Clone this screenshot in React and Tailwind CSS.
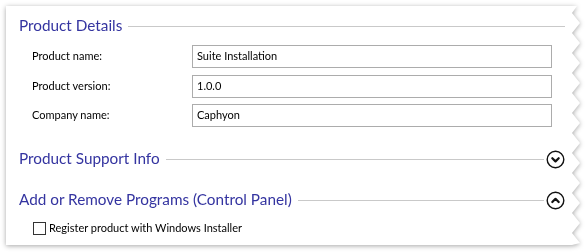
import React from 'react';

const font = { fontFamily: 'Lato, "Noto Sans", sans-serif' };

const fields = [
  { label: 'Product name:', value: 'Suite Installation' },
  { label: 'Product version:', value: '1.0.0' },
  { label: 'Company name:', value: 'Caphyon' },
];

// Circle with chevron, used to expand / collapse a section
const ToggleIcon = ({ up }) => (
  <svg width="19" height="19" viewBox="0 0 19 19" className="shrink-0">
    <circle cx="9.5" cy="9.5" r="8.3" fill="white" stroke="#111" strokeWidth="1.4" />
    <path
      d={up ? 'M6.3 11 L9.5 7.8 L12.7 11' : 'M6.3 8.2 L9.5 11.4 L12.7 8.2'}
      fill="none"
      stroke="#111"
      strokeWidth="2.2"
      strokeLinecap="round"
      strokeLinejoin="round"
    />
  </svg>
);

const SectionHeader = ({ title, toggle, className }) => (
  <div className={`flex items-center h-[20px] ${className}`}>
    <span className="text-[15.3px] text-[#3434a0] leading-none whitespace-nowrap">{title}</span>
    <div className="flex-1 h-px bg-[#c9c9c9] ml-[6px]" />
    {toggle && (
      <div className="ml-[2px]">
        <ToggleIcon up={toggle === 'up'} />
      </div>
    )}
  </div>
);

// Torn right edge of the panel
const TornEdge = () => {
  const h = 239;
  const pts = ['0,0', '5,0'];
  for (let y = 7; y < h; y += 20) {
    pts.push(`0,${y}`);
    if (y + 10 < h) pts.push(`8,${y + 10}`);
  }
  pts.push(`0,${h}`);
  return (
    <svg width="8" height={h} className="block">
      <polygon points={pts.join(' ')} fill="white" />
    </svg>
  );
};

export default function App() {
  return (
    <div className="w-[587px] h-[252px] bg-white pt-[6px] pl-[6px]" style={font}>
      <div className="flex drop-shadow-[0_1px_2.5px_rgba(0,0,0,0.35)]">
        <div className="w-[566px] h-[239px] bg-white pl-[13px] pr-[7px] pt-[10px]">
          <SectionHeader title="Product Details" />

          <div className="mt-[9px] pl-[13px] pr-[13px] flex flex-col gap-[6.5px]">
            {fields.map((f) => (
              <div key={f.label} className="flex items-center h-[23px]">
                <span className="w-[160px] text-[11px] text-black">{f.label}</span>
                <div className="flex-1 h-[23px] border border-[#acacac] flex items-center px-[4px] text-[11px] text-black">
                  {f.value}
                </div>
              </div>
            ))}
          </div>

          <SectionHeader title="Product Support Info" toggle="down" className="mt-[22px]" />
          <SectionHeader title="Add or Remove Programs (Control Panel)" toggle="up" className="mt-[21px]" />

          <div className="mt-[8px] h-[21px] flex items-center pl-[14px]">
            <div className="w-[13px] h-[13px] border border-[#333] bg-white" />
            <span className="ml-[3px] text-[11px] text-black">Register product with Windows Installer</span>
          </div>
        </div>
        <TornEdge />
      </div>
    </div>
  );
}
